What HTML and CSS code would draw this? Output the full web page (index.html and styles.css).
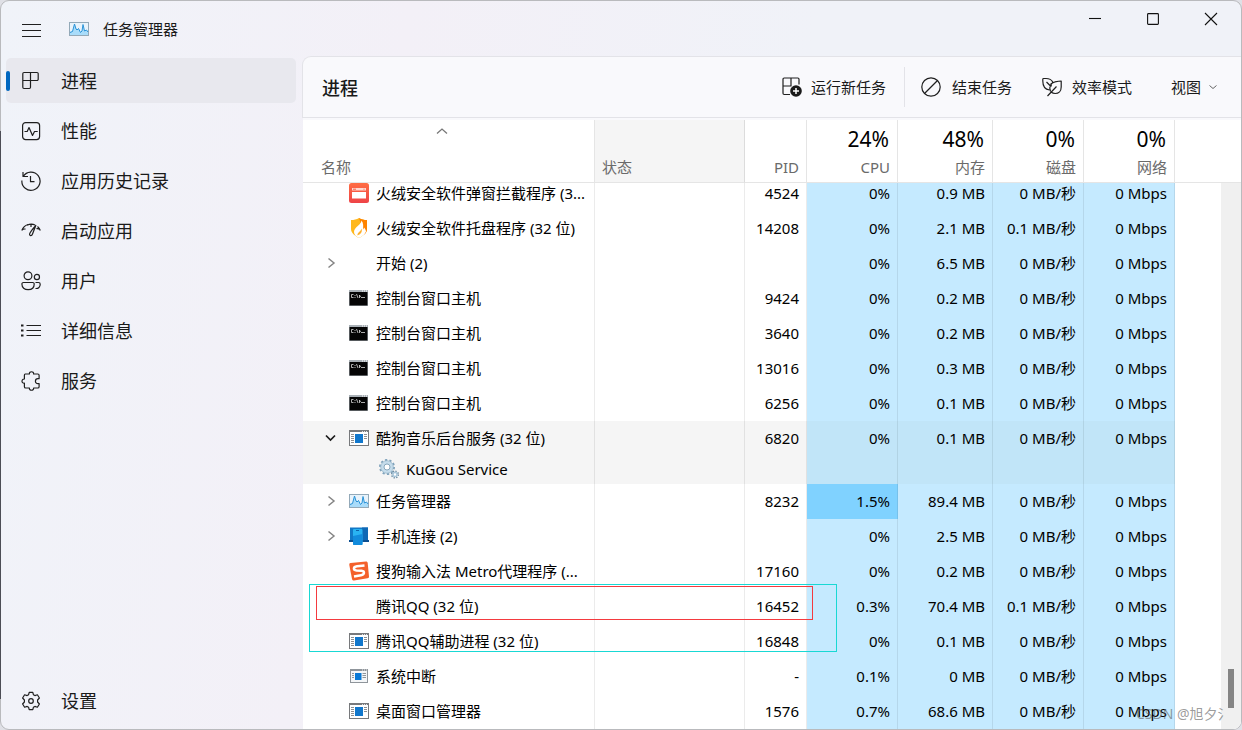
FILE: index.html
```html
<!DOCTYPE html>
<html lang="zh-CN">
<head>
<meta charset="utf-8">
<title>任务管理器</title>
<link rel="stylesheet" href="styles.css">
</head>
<body>
<svg class="sprite" aria-hidden="true">
  <symbol id="i-monitor" viewBox="0 0 20 20">
    <rect x=".5" y="3.500" width="19" height="13" fill="#e8f3fb" stroke="#93a9b8"/>
    <path d="M1 13 3.500 12 5.500 5 8 11 9.500 9 11.500 13.500 13 12 14 6 15.500 12 17.500 11 19 13V16H1z" fill="#a9dcfa"/>
    <path d="M1 13.500 3.500 12.500 5.500 5 7 10 8 11 9.500 9.500 11.500 13.500 13 12 14 5.500 15.500 12 17.500 11 19 13" fill="none" stroke="#2b93d8" stroke-width="1"/>
  </symbol>
  <symbol id="i-console" viewBox="0 0 20 20">
    <rect x="0" y="2" width="19" height="16" fill="#a9b0b6"/>
    <rect x=".5" y="4" width="18" height="13.500" fill="#050505"/>
    <path d="M13 3h1M15 3h1M17 3h1" stroke="#fff"/>
    <path d="M4.500 6.500H2.500V9.500H4.500M6 7v1M6 9v1M7.500 6l1.500 4M10.500 10V7l1 2M12 9.500h4" fill="none" stroke="#d8d8d8" stroke-width=".8"/>
  </symbol>
  <symbol id="i-app" viewBox="0 0 20 20">
    <rect x=".5" y="2.500" width="19" height="15" fill="#fff" stroke="#77797c"/>
    <path d="M0 3h20" stroke="#77797c" stroke-width="2"/>
    <path d="M13 3.500h1M15 3.500h1M17 3.500h1" stroke="#ddd"/>
    <path d="M2 6.500h3M2 8.500h3M2 10.500h3M2 12.500h3M2 14.500h3M15 6.500h3M15 8.500h3M15 10.500h3" stroke="#8d8f91"/>
    <rect x="6" y="6" width="8" height="9" fill="#1177cc"/>
  </symbol>
  <symbol id="i-app-small" viewBox="0 0 20 20">
    <rect x="1.500" y="3.500" width="17" height="13" fill="#f4f6f8" stroke="#8f959b"/>
    <path d="M1 4h18" stroke="#8f959b" stroke-width="2"/>
    <path d="M13 4h1M15 4h1M17 4h1" stroke="#eee"/>
    <path d="M3 7.500h2M3 9.500h2M3 11.500h2M13.500 7.500h3.500M13.500 9.500h3.500M13.500 11.500h3.500" stroke="#8f959b"/>
    <rect x="6" y="7" width="6.500" height="7" fill="#0878d6"/>
  </symbol>
  <symbol id="i-popup" viewBox="0 0 20 20">
    <linearGradient id="g-red" x1="0" y1="0" x2="0" y2="1"><stop offset="0" stop-color="#ff6d43"/><stop offset="1" stop-color="#ee4347"/></linearGradient>
    <rect width="20" height="20" rx="2.500" fill="url(#g-red)"/>
    <path d="M3 5h14v2.500H3z" fill="#ffd9d0"/>
    <path d="M4 6.200h3M14.500 6.200h1" stroke="#f2604c"/>
    <path d="M3 9h14v6.500H3z" fill="#fff"/>
  </symbol>
  <symbol id="i-shield" viewBox="0 0 20 20">
    <path d="M10 0C7.500 1.500 5 2 2 2v9c0 4 4 7 8 9 4-2 8-5 8-9V2c-3 0-5.500-.5-8-2z" fill="#ffb81c"/>
    <path d="M10 0c2.500 1.500 5 2 8 2v9c0 2-1 4-2.500 5.500z" fill="#ff8300"/>
    <path d="M12.500 2.500C12.500 7 5 9 5 14c0 2.500 2 4.500 5 6 4-2 6-4 7-6.500-.2-2-1-3-2-4-.2 1-.6 1.700-1.200 2.300C14.500 8.500 14.500 5 12.500 2.500z" fill="#fff"/>
    <path d="M12.500 2.500c.3 4-5.500 7-6 11.500 0 1.500.5 2.500 1.500 3.500.5-4 4.500-5 4.800-9z" fill="#fff"/>
    <path d="M8.500 17.500c-.5-3 3.500-4 4-7 1 2.500 0 5.500-4 7z" fill="#ffb12a"/>
  </symbol>
  <symbol id="i-gears" viewBox="0 0 20 20">
    <circle cx="8" cy="8" r="7" fill="none" stroke="#7fa2bb" stroke-width="2" stroke-dasharray="2.200 2.200"/>
    <circle cx="8" cy="8" r="4.700" fill="none" stroke="#c5dceb" stroke-width="3.200"/>
    <circle cx="8" cy="8" r="6.300" fill="none" stroke="#91b1c5" stroke-width=".7"/>
    <circle cx="8" cy="8" r="3" fill="#fff" stroke="#6f94ad" stroke-width=".8"/>
    <circle cx="16" cy="15.500" r="3.300" fill="none" stroke="#6e8ca1" stroke-width="1.600" stroke-dasharray="1.300 1.290"/>
    <circle cx="16" cy="15.500" r="2" fill="#fff" stroke="#a8c6da" stroke-width="1.500"/>
  </symbol>
  <symbol id="i-phone" viewBox="0 0 20 20">
    <path d="M1 1.500h18V14H1z" fill="#1278c6"/>
    <path d="M0 14h20v2H0z" fill="#0c4f91"/>
    <path d="M13 1.500h6V14h-6z" fill="#0f68b5"/>
    <rect x="4" y="3" width="9.500" height="16" rx="1" fill="#29b3f2"/>
    <path d="M4 10 13.500 8v10a1 1 0 0 1-1 1H5a1 1 0 0 1-1-1z" fill="#128bdc"/>
    <path d="M7 4.500h3" stroke="#0b5fa8"/>
  </symbol>
  <symbol id="i-sogou" viewBox="0 0 20 20">
    <path d="M1.500 2 17 .5c1 0 1.500.5 1.700 1.500L20 15.500c0 1-.5 1.500-1.500 1.800L5 19.500c-1 0-1.700-.5-2-1.500L.3 4C.2 2.800.5 2.200 1.500 2z" fill="#f4602b"/>
    <path d="M15.500 4.500 8 5.200c-4 .5-4 4-.5 4.300l5 .3c3.500.4 3.200 3.800-.5 4.400l-7 1.300" fill="none" stroke="#fff" stroke-width="2.500"/>
  </symbol>
  <symbol id="i-right" viewBox="0 0 20 20"><path d="M7.500 5.500 13 10l-5.500 4.500" fill="none" stroke="#858585" stroke-width="1.500"/></symbol>
  <symbol id="i-down" viewBox="0 0 20 20"><path d="M5 7.500 9.500 12 14 7.500" fill="none" stroke="#1b1b1b" stroke-width="1.700"/></symbol>
</svg>

<div class="window">
  <header class="titlebar">
    <button class="menu-button" type="button" aria-label="打开导航">
      <svg class="icon" viewBox="0 0 20 20"><path d="M1 5.500h19M1 11.500h19M1 17.500h19"/></svg>
    </button>
    <svg class="app-icon"><use href="#i-monitor"/></svg>
    <h1 class="app-title">任务管理器</h1>
    <div class="window-controls">
      <button type="button" aria-label="最小化"><svg viewBox="0 0 12 12"><path d="M0 5.500h12"/></svg></button>
      <button type="button" aria-label="最大化"><svg viewBox="0 0 12 12"><rect x=".6" y=".6" width="10.800" height="10.800" rx=".8"/></svg></button>
      <button type="button" aria-label="关闭"><svg viewBox="0 0 12 12"><path d="m0 0 12 12M12 0 0 12"/></svg></button>
    </div>
  </header>

  <div class="body">
    <nav class="sidebar">
      <button class="nav-item active" type="button">
        <svg class="icon" viewBox="0 0 20 20"><path d="M3 1.500h13a1.200 1.200 0 0 1 1.200 1.200v5.600a1.200 1.200 0 0 1-1.200 1.200H9.500v6.800a1.200 1.200 0 0 1-1.200 1.200H3a1.200 1.200 0 0 1-1.200-1.200V2.700A1.200 1.200 0 0 1 3 1.500zM9.500 1.500v8M1.800 9.500h7.700"/></svg>
        <span>进程</span>
      </button>
      <button class="nav-item" type="button">
        <svg class="icon" viewBox="0 0 20 20"><rect x="1.600" y="1.600" width="17" height="17" rx="3"/><path d="M3.500 10.500h2.700L8 6.500l3.500 8 2-4h3.200"/></svg>
        <span>性能</span>
      </button>
      <button class="nav-item" type="button">
        <svg class="icon" viewBox="0 0 20 20"><path d="M2 1v4.500h5M2.200 5.500A9.100 9.100 0 1 1 .9 9.500M9.500 5v5.700h4"/></svg>
        <span>应用历史记录</span>
      </button>
      <button class="nav-item" type="button">
        <svg class="icon" viewBox="0 0 20 20"><path d="M.8 9.500C2 6.500 4.300 4.300 7 3.500M1 9c1-.8 2.200-1.200 3.500-.9M6 4.200c3-1.500 6-1.300 8-.2M10 3v3M14.800 4.500 11.500 13c-.8 2.500-3.500 2-2.800-.3.400-1.300 1.300-2.300 2.300-3.700zM16.500 5.500c1.400 1.200 2.200 2.300 2.800 4M19 8.500c-1-.8-2-1.200-3.500-.8"/></svg>
        <span>启动应用</span>
      </button>
      <button class="nav-item" type="button">
        <svg class="icon" viewBox="0 0 20 20"><circle cx="7" cy="4.800" r="3.900"/><circle cx="15.900" cy="6" r="2.600"/><path d="M2.500 11.500h9.200a1.500 1.500 0 0 1 1.500 1.500c0 3.700-2.500 5.700-6.100 5.700S.9 16.700.9 13a1.500 1.500 0 0 1 1.600-1.500zM14.500 11.500h3a1.700 1.700 0 0 1 1.700 1.700c0 2.800-1.700 4.500-4.700 4.300"/></svg>
        <span>用户</span>
      </button>
      <button class="nav-item" type="button">
        <svg class="icon" viewBox="0 0 20 20"><path d="M5.500 4.500H20M5.500 9.500H20M5.500 14.500H20"/><path class="dots" d="M0 4.500h2.500M0 9.500h2.500M0 14.500h2.500"/></svg>
        <span>详细信息</span>
      </button>
      <button class="nav-item" type="button">
        <svg class="icon" viewBox="0 0 20 20"><path d="M4.200 3h4.200c-.4-3 4.600-3 4.200 0h4.200a1.300 1.300 0 0 1 1.300 1.300v3.400h-1.200c-3.300 0-3.300 4.900 0 4.900h1.200v3.100a1.300 1.300 0 0 1-1.300 1.300h-4.200c.4 3-4.600 3-4.200 0H4.700a1.300 1.300 0 0 1-1.300-1.300v-3.500c-3.200.5-3.200-4.600 0-4.200V4.300A1.300 1.300 0 0 1 4.200 3z"/></svg>
        <span>服务</span>
      </button>
      <button class="nav-item nav-settings" type="button">
        <svg class="icon" viewBox="0 0 20 20"><circle cx="10" cy="10" r="2.300"/><path d="M8.200 1.300h3.600l.6 2.400 1.500.9 2.500-.8 2 3.200-1.800 2v2l1.800 2-2 3.200-2.500-.8-1.500.9-.6 2.400H8.200l-.6-2.400-1.500-.9-2.500.8-2-3.200 1.800-2V9L1.600 7l2-3.200 2.500.8 1.500-.9z"/></svg>
        <span>设置</span>
      </button>
    </nav>

    <main class="panel">
      <div class="toolbar">
        <h2 class="page-title">进程</h2>
        <button class="tool tool-run" type="button">
          <svg class="icon" viewBox="0 0 20 20"><path d="M8 17.500H2.200A1.200 1.200 0 0 1 1 16.300V2.200A1.200 1.200 0 0 1 2.200 1h13.600A1.200 1.200 0 0 1 17 2.200v5.300M9 1v8M1 9h8.500"/><circle class="solid" cx="14" cy="14" r="5.800"/><path class="plus" d="M14 11v6M11 14h6"/></svg>
          <span>运行新任务</span>
        </button>
        <button class="tool tool-end" type="button">
          <svg class="icon" viewBox="0 0 20 20"><circle cx="10" cy="10" r="9.200"/><path d="M3.500 16.500l13-13"/></svg>
          <span>结束任务</span>
        </button>
        <button class="tool tool-eco" type="button">
          <svg class="icon" viewBox="0 0 20 20"><path d="M7.500 13C3.500 12.500.8 9.500.8 4V2.200C.8 1.700 1.200 1.500 1.600 1.500H4c3.500 0 5.500 1.200 6.800 3.600M4.500 5l4 4M8.500 14.500C6.500 9.500 9 5.500 13 4.800c2-.4 4-.8 6.200-.8V10c0 4-2.500 6.500-6 6.500-1.500 0-2.700-.3-3.800-1.200M5.500 19 14.500 9.500M9.200 9.500V6"/></svg>
          <span>效率模式</span>
        </button>
        <button class="tool tool-view" type="button">
          <span>视图</span>
          <svg class="caret" viewBox="0 0 8 8"><path d="m.5 2.500 3.500 3 3.500-3"/></svg>
        </button>
      </div>

      <div class="list">
        <table class="processes">
          <colgroup>
            <col class="c-name"><col class="c-status"><col class="c-pid"><col class="c-cpu"><col class="c-mem"><col class="c-disk"><col class="c-net"><col>
          </colgroup>
          <thead>
            <tr>
              <th class="name" scope="col" aria-sort="ascending"><svg class="sort" viewBox="0 0 12 8"><path d="M1 6.500 6 2l5 4.500"/></svg>名称</th>
              <th class="status" scope="col">状态</th>
              <th scope="col">PID</th>
              <th scope="col"><strong>24%</strong>CPU</th>
              <th scope="col"><strong>48%</strong>内存</th>
              <th scope="col"><strong>0%</strong>磁盘</th>
              <th scope="col"><strong>0%</strong>网络</th>
              <td class="rest"></td>
            </tr>
          </thead>
          <tbody>
            <tr class="partial"><td><div class="proc"><svg class="glyph"><use href="#i-popup"/></svg><span>火绒安全软件弹窗拦截程序 (3...</span></div></td><td></td><td>4524</td><td class="heat">0%</td><td class="heat">0.9 MB</td><td class="heat">0 MB/秒</td><td class="heat">0 Mbps</td><td class="rest"></td></tr>
            <tr><td><div class="proc"><svg class="glyph"><use href="#i-shield"/></svg><span>火绒安全软件托盘程序 (32 位)</span></div></td><td></td><td>14208</td><td class="heat">0%</td><td class="heat">2.1 MB</td><td class="heat">0.1 MB/秒</td><td class="heat">0 Mbps</td><td class="rest"></td></tr>
            <tr><td><div class="proc"><button class="expander" type="button" aria-label="展开"><svg><use href="#i-right"/></svg></button><span>开始 (2)</span></div></td><td></td><td></td><td class="heat">0%</td><td class="heat">6.5 MB</td><td class="heat">0 MB/秒</td><td class="heat">0 Mbps</td><td class="rest"></td></tr>
            <tr><td><div class="proc"><svg class="glyph"><use href="#i-console"/></svg><span>控制台窗口主机</span></div></td><td></td><td>9424</td><td class="heat">0%</td><td class="heat">0.2 MB</td><td class="heat">0 MB/秒</td><td class="heat">0 Mbps</td><td class="rest"></td></tr>
            <tr><td><div class="proc"><svg class="glyph"><use href="#i-console"/></svg><span>控制台窗口主机</span></div></td><td></td><td>3640</td><td class="heat">0%</td><td class="heat">0.2 MB</td><td class="heat">0 MB/秒</td><td class="heat">0 Mbps</td><td class="rest"></td></tr>
            <tr><td><div class="proc"><svg class="glyph"><use href="#i-console"/></svg><span>控制台窗口主机</span></div></td><td></td><td>13016</td><td class="heat">0%</td><td class="heat">0.3 MB</td><td class="heat">0 MB/秒</td><td class="heat">0 Mbps</td><td class="rest"></td></tr>
            <tr><td><div class="proc"><svg class="glyph"><use href="#i-console"/></svg><span>控制台窗口主机</span></div></td><td></td><td>6256</td><td class="heat">0%</td><td class="heat">0.1 MB</td><td class="heat">0 MB/秒</td><td class="heat">0 Mbps</td><td class="rest"></td></tr>
            <tr class="group"><td><div class="proc"><button class="expander" type="button" aria-label="折叠"><svg><use href="#i-down"/></svg></button><svg class="glyph"><use href="#i-app"/></svg><span>酷狗音乐后台服务 (32 位)</span></div></td><td></td><td>6820</td><td class="heat">0%</td><td class="heat">0.1 MB</td><td class="heat">0 MB/秒</td><td class="heat">0 Mbps</td><td class="rest"></td></tr>
            <tr class="group child"><td><div class="proc"><svg class="glyph"><use href="#i-gears"/></svg><span>KuGou Service</span></div></td><td></td><td></td><td class="heat"></td><td class="heat"></td><td class="heat"></td><td class="heat"></td><td class="rest"></td></tr>
            <tr><td><div class="proc"><button class="expander" type="button" aria-label="展开"><svg><use href="#i-right"/></svg></button><svg class="glyph"><use href="#i-monitor"/></svg><span>任务管理器</span></div></td><td></td><td>8232</td><td class="heat hot">1.5%</td><td class="heat">89.4 MB</td><td class="heat">0 MB/秒</td><td class="heat">0 Mbps</td><td class="rest"></td></tr>
            <tr><td><div class="proc"><button class="expander" type="button" aria-label="展开"><svg><use href="#i-right"/></svg></button><svg class="glyph"><use href="#i-phone"/></svg><span>手机连接 (2)</span></div></td><td></td><td></td><td class="heat">0%</td><td class="heat">2.5 MB</td><td class="heat">0 MB/秒</td><td class="heat">0 Mbps</td><td class="rest"></td></tr>
            <tr><td><div class="proc"><svg class="glyph"><use href="#i-sogou"/></svg><span>搜狗输入法 Metro代理程序 (...</span></div></td><td></td><td>17160</td><td class="heat">0%</td><td class="heat">0.2 MB</td><td class="heat">0 MB/秒</td><td class="heat">0 Mbps</td><td class="rest"></td></tr>
            <tr><td><div class="proc"><span>腾讯QQ (32 位)</span></div></td><td></td><td>16452</td><td class="heat">0.3%</td><td class="heat">70.4 MB</td><td class="heat">0.1 MB/秒</td><td class="heat">0 Mbps</td><td class="rest"></td></tr>
            <tr><td><div class="proc"><svg class="glyph"><use href="#i-app"/></svg><span>腾讯QQ辅助进程 (32 位)</span></div></td><td></td><td>16848</td><td class="heat">0%</td><td class="heat">0.1 MB</td><td class="heat">0 MB/秒</td><td class="heat">0 Mbps</td><td class="rest"></td></tr>
            <tr><td><div class="proc"><svg class="glyph"><use href="#i-app-small"/></svg><span>系统中断</span></div></td><td></td><td>-</td><td class="heat">0.1%</td><td class="heat">0 MB</td><td class="heat">0 MB/秒</td><td class="heat">0 Mbps</td><td class="rest"></td></tr>
            <tr><td><div class="proc"><svg class="glyph"><use href="#i-app"/></svg><span>桌面窗口管理器</span></div></td><td></td><td>1576</td><td class="heat">0.7%</td><td class="heat">68.6 MB</td><td class="heat">0 MB/秒</td><td class="heat">0 Mbps</td><td class="rest"></td></tr>
          </tbody>
        </table>
        <div class="scrollbar"><div class="thumb"></div></div>
        <div class="mark mark-outer"></div>
        <div class="mark mark-inner"></div>
        <div class="watermark">CSDN @旭夕氵</div>
      </div>
    </main>
  </div>
</div>
</body>
</html>
```

FILE: styles.css
```css
* { box-sizing: border-box; }

body {
  margin: 0;
  background: #dfe0e6;
  color: #1a1a1a;
  font-family: "Noto Sans", "Noto Sans CJK SC", sans-serif;
  font-size: 15px;
}

button {
  border: 0;
  padding: 0;
  background: none;
  color: inherit;
  font: inherit;
}

h1, h2 { margin: 0; font-weight: 400; }

svg { display: block; flex: none; }

.sprite { position: absolute; width: 0; height: 0; }

.window {
  position: relative;
  display: flex;
  flex-direction: column;
  min-height: 100vh;
  border: 1px solid #b9babd;
  border-radius: 9px;
  background: linear-gradient(100deg, #f0f3f9, #f3f0f7 30%, #f0f2f8 60%);
}

.window::before {
  content: "";
  position: absolute;
  left: -1px;
  top: 130px;
  bottom: 30px;
  width: 1px;
  background: #4c4d55;
}

.icon {
  width: 20px;
  height: 20px;
  fill: none;
  stroke: #1f1f1f;
  stroke-width: 1.2;
  stroke-linejoin: round;
}

.icon .dots { stroke-width: 2; }
.icon .solid { fill: #1a1a1a; stroke: none; }
.icon .plus { stroke: #fff; stroke-width: 1.5; }

/* Title bar */
.titlebar {
  display: flex;
  align-items: center;
  height: 55px;
  padding-left: 20px;
}

.menu-button { margin-right: 28px; }

.app-icon { width: 20px; height: 20px; margin-right: 14px; }

.app-title { font-size: 15px; line-height: 22px; }

.window-controls {
  display: flex;
  align-self: flex-start;
  margin-left: auto;
  margin-right: 1px;
}

.window-controls button {
  display: grid;
  place-items: center;
  width: 58px;
  height: 36px;
}

.window-controls svg {
  width: 12px;
  height: 12px;
  fill: none;
  stroke: #111;
  stroke-width: 1.1;
  overflow: visible;
}

.body { display: flex; flex: 1; }

/* Navigation */
.sidebar {
  display: flex;
  flex: none;
  flex-direction: column;
  gap: 5px;
  width: 301px;
  padding: 2px 6px 6px 5px;
}

.nav-item {
  position: relative;
  display: flex;
  align-items: center;
  gap: 20px;
  height: 45px;
  padding-left: 15px;
  border-radius: 5px;
  font-size: 18px;
  text-align: left;
}

.nav-item span { padding-bottom: 2px; }

.nav-item.active { background: #e8e8ee; }

.nav-item.active::before {
  content: "";
  position: absolute;
  left: 0;
  top: 13px;
  width: 4px;
  height: 20px;
  border-radius: 2px;
  background: #0067c0;
}

.nav-settings { margin-top: auto; }

/* Panel */
.panel {
  display: flex;
  flex: 1;
  flex-direction: column;
  min-width: 0;
}

.toolbar {
  display: flex;
  align-items: center;
  height: 62px;
  padding: 0 24px 0 19px;
  border: solid #e3e3e8;
  border-width: 1px 0 1px 1px;
  border-top-left-radius: 9px;
  background: #f9f9fc;
}

.page-title { font-size: 18px; font-weight: 500; }

.tool { display: flex; align-items: center; }

.tool span { padding-bottom: 2px; }

.tool-run { gap: 9px; margin-left: auto; }

.tool-end {
  gap: 11px;
  height: 40px;
  margin-left: 18px;
  padding-left: 16px;
  border-left: 1px solid #e3e3e8;
}

.tool-eco { gap: 10px; margin-left: 30px; }

.tool-view { gap: 8px; margin-left: 39px; }

.caret {
  width: 8px;
  height: 8px;
  fill: none;
  stroke: #666;
}

/* Process list */
.list {
  position: relative;
  display: flex;
  flex: 1;
  margin-left: 1px;
  border-top: 2px solid #f9f9fc;
  border-bottom-right-radius: 8px;
  background: #fff;
  color: #000;
}

.processes {
  flex: 1;
  align-self: flex-start;
  width: 100%;
  min-width: 0;
  table-layout: fixed;
  border-spacing: 0;
}

.c-name { width: 292px; }
.c-status { width: 150px; }
.c-pid { width: 62px; }
.c-cpu, .c-disk, .c-net { width: 91px; }
.c-mem { width: 95px; }

.processes th {
  height: 63px;
  padding: 0 7px 4px;
  border-right: 1px solid rgba(0, 0, 0, .1);
  border-bottom: 1px solid #e5e5e5;
  color: #6a6a6a;
  font-weight: 400;
  line-height: 22px;
  text-align: right;
  vertical-align: bottom;
}

.processes thead .rest { border-bottom: 1px solid #e5e5e5; }

.processes th strong {
  display: block;
  padding-right: 1px;
  color: #000;
  font-size: 21px;
  font-weight: 400;
  line-height: 34px;
}

.processes th.name { padding-left: 18px; padding-right: 32px; text-align: left; }

.processes th.status { background: #f5f5f5; text-align: left; }

.sort {
  width: 12px;
  height: 8px;
  margin: 0 auto 21px;
  fill: none;
  stroke: #777;
  stroke-width: 1.3;
}

.processes tbody td {
  height: 35px;
  padding: 0 7px 2px;
  border-right: 1px solid rgba(0, 0, 0, .08);
  line-height: 20px;
  text-align: right;
  white-space: nowrap;
}

.processes tbody td:first-child { padding-left: 18px; }

.processes tbody .rest { border-right: 0; }

.processes tbody .heat { background: #c5eaff; }
.processes tbody .hot { background: #80d2ff; }

.group { background: #f5f5f5; }
.processes .group .heat { background: #c1e5f8; }
.group .rest { background: #fff; }

/* The first row is partly scrolled under the header. */
.processes tbody .partial td { height: 28px; padding-bottom: 8px; }

.processes tbody .child td { height: 28px; }

.proc {
  display: grid;
  grid-template-columns: 20px 20px minmax(0, 1fr);
  align-items: center;
  height: 20px;
  text-align: left;
}

.child .proc { grid-template-columns: 50px 20px minmax(0, 1fr); }

.expander { grid-column: 1; grid-row: 1; }

.expander svg { width: 20px; height: 20px; }

.glyph {
  grid-column: 2;
  grid-row: 1;
  width: 20px;
  height: 20px;
  margin-left: 8px;
  overflow: visible;
}

.proc span {
  grid-column: 3;
  grid-row: 1;
  overflow: hidden;
  margin-left: 15px;
  text-overflow: ellipsis;
}

.scrollbar {
  flex: none;
  display: flex;
  flex-direction: column;
  justify-content: flex-end;
  align-items: center;
  width: 20px;
  margin-top: 62px;
  padding-bottom: 21px;
  border-top: 1px solid #e5e5e5;
  border-bottom-right-radius: 8px;
  background: #f0f0f0;
}

.thumb { width: 6px; height: 39px; background: #858585; }

/* Highlight frames drawn over the list */
.mark { position: absolute; border: 1px solid; }

.mark-outer { left: 6px; top: 464px; width: 528px; height: 68px; border-color: #19d8d4; }

.mark-inner { left: 13px; top: 466px; width: 497px; height: 34px; border-color: #f43a3f; }

.watermark {
  position: absolute;
  right: 15px;
  bottom: 5px;
  width: 90px;
  overflow: hidden;
  color: rgba(90, 90, 90, .6);
  font-size: 14px;
  line-height: 20px;
  white-space: nowrap;
}
```
